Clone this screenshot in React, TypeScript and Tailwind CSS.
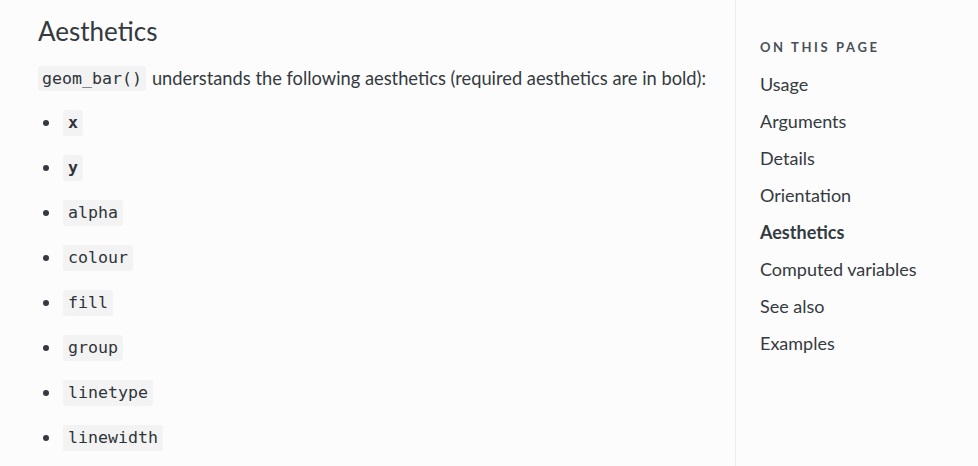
const items = [
  { name: "x", bold: true },
  { name: "y", bold: true },
  { name: "alpha", bold: false },
  { name: "colour", bold: false },
  { name: "fill", bold: false },
  { name: "group", bold: false },
  { name: "linetype", bold: false },
  { name: "linewidth", bold: false },
];

const toc = [
  "Usage",
  "Arguments",
  "Details",
  "Orientation",
  "Aesthetics",
  "Computed variables",
  "See also",
  "Examples",
];

const mono = "font-['DejaVu_Sans_Mono','Liberation_Mono',monospace]";

const App = () => {
  return (
    <div className="w-[978px] h-[466px] overflow-hidden flex bg-[#fcfcfc] text-[#343a40] font-['Lato','Noto_Sans',sans-serif]">
      <main className="w-[735px] shrink-0 pl-[38px] pt-[14px]">
        <h2 className="text-[26px] leading-[34px] font-normal">Aesthetics</h2>
        <p className="mt-[16px] text-[18.3px] leading-[28px] flex items-center gap-[6px]">
          <code className={`${mono} text-[16.6px] leading-[25px] bg-[#f3f3f3] rounded-[3px] px-[4px] text-[#2f343a]`}>
            geom_bar()
          </code>
          <span>understands the following aesthetics (required aesthetics are in bold):</span>
        </p>
        <ul className="mt-[18px] flex flex-col gap-[19px]">
          {items.map((it) => (
            <li key={it.name} className="flex items-center h-[26px]">
              <span className="w-[6px] h-[6px] rounded-full bg-[#343a40] ml-[5px] mr-[14px]" />
              <code
                className={`${mono} text-[16.6px] leading-[26px] bg-[#f3f3f3] rounded-[3px] px-[5px] text-[#2f343a] ${
                  it.bold ? "font-bold" : ""
                }`}
              >
                {it.name}
              </code>
            </li>
          ))}
        </ul>
      </main>
      <aside className="flex-1 border-l border-[#ebebeb] pl-[24px] pt-[38px]">
        <h2 className="text-[13px] leading-[18px] font-bold tracking-[0.2em] uppercase text-[#4a5058]">
          On this page
        </h2>
        <nav className="mt-[15px] flex flex-col gap-[11px]">
          {toc.map((t) => (
            <a
              key={t}
              className={`text-[18px] leading-[26px] ${t === "Aesthetics" ? "font-bold" : ""}`}
            >
              {t}
            </a>
          ))}
        </nav>
      </aside>
    </div>
  );
};

export default App;
